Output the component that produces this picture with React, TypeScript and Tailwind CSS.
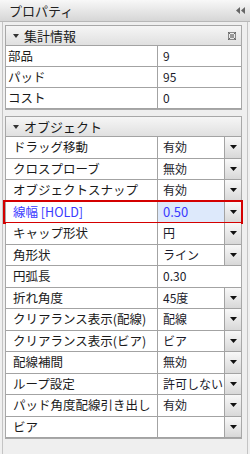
type Row = { label: string; value: string; dropdown?: boolean; selected?: boolean };

const summary: Row[] = [
  { label: '部品', value: '9' },
  { label: 'パッド', value: '95' },
  { label: 'コスト', value: '0' },
];

const objects: Row[] = [
  { label: 'ドラッグ移動', value: '有効', dropdown: true },
  { label: 'クロスプローブ', value: '無効', dropdown: true },
  { label: 'オブジェクトスナップ', value: '有効', dropdown: true },
  { label: '線幅 [HOLD]', value: '0.50', dropdown: true, selected: true },
  { label: 'キャップ形状', value: '円', dropdown: true },
  { label: '角形状', value: 'ライン', dropdown: true },
  { label: '円弧長', value: '0.30' },
  { label: '折れ角度', value: '45度', dropdown: true },
  { label: 'クリアランス表示(配線)', value: '配線', dropdown: true },
  { label: 'クリアランス表示(ビア)', value: 'ビア', dropdown: true },
  { label: '配線補間', value: '無効', dropdown: true },
  { label: 'ループ設定', value: '許可しない', dropdown: true },
  { label: 'パッド角度配線引き出し', value: '有効', dropdown: true },
  { label: 'ビア', value: '', dropdown: true },
];

function Caret() {
  return (
    <svg width="7" height="4" viewBox="0 0 7 4">
      <path d="M0 0h7L3.5 4z" fill="#111" />
    </svg>
  );
}

function PropRow({ row, tall, indent }: { row: Row; tall?: boolean; indent?: boolean }) {
  const sel = row.selected;
  return (
    <div
      className={
        'relative flex border-b border-[#a3a3a3] ' +
        (tall ? 'h-[21.5px] ' : 'h-[21px] ') +
        (sel ? 'bg-[#dde9fb]' : 'bg-white')
      }
    >
      <div
        className={
          'w-[152px] shrink-0 border-r border-[#a3a3a3] text-[12.5px] leading-[20px] whitespace-nowrap overflow-hidden ' +
          (indent ? 'pl-[7px] ' : 'pl-[2px] ') +
          (sel ? 'bg-white text-[#3a3aff]' : 'text-[#1a1a1a]')
        }
      >
        {row.label}
      </div>
      <div
        className={
          'flex-1 min-w-0 pl-[5px] text-[12px] leading-[20px] whitespace-nowrap overflow-hidden ' +
          (sel ? 'text-[#3a3aff] text-[13px]' : 'text-[#1a1a2a]')
        }
      >
        {row.value}
      </div>
      {row.dropdown && (
        <div className="w-[17px] shrink-0 border-l border-[#a3a3a3] bg-gradient-to-b from-[#f8f8f8] to-[#d8d8d8] flex items-center justify-center">
          <Caret />
        </div>
      )}
      {sel && (
        <div className="absolute left-[-3px] right-[-2px] top-[-2px] bottom-[-2px] border-2 border-[#d40000] pointer-events-none" />
      )}
    </div>
  );
}

function Section({
  title,
  rows,
  pin,
  tall,
  indent,
}: {
  title: string;
  rows: Row[];
  pin?: boolean;
  tall?: boolean;
  indent?: boolean;
}) {
  return (
    <div className="border border-[#a8a8a8] bg-white">
      <div className="flex h-[20px] items-center justify-between border-b border-[#a3a3a3] bg-gradient-to-b from-[#f6f6f6] to-[#e0e0e0] pl-[7px] pr-[5px]">
        <div className="flex items-center gap-[5px] text-[13px] text-[#1a1a1a]">
          <svg width="6" height="4" viewBox="0 0 6 4">
            <path d="M0 0h6L3 4z" fill="#333" />
          </svg>
          <span>{title}</span>
        </div>
        {pin && (
          <svg width="8" height="8" viewBox="0 0 8 8">
            <rect x="0.5" y="0.5" width="7" height="7" fill="none" stroke="#888" />
            <rect x="2" y="2" width="4" height="4" fill="#999" />
            <path d="M0 0l2 2M8 0L6 2M0 8l2-2M8 8L6 6" stroke="#666" />
          </svg>
        )}
      </div>
      {rows.map((r) => (
        <PropRow key={r.label} row={r} tall={tall} indent={indent} />
      ))}
    </div>
  );
}

export default function App() {
  return (
    <div
      className="w-[250px] h-[454px] bg-[#f0f0f0] flex flex-col overflow-hidden"
      style={{ fontFamily: '"Noto Sans CJK JP", "Noto Sans", sans-serif' }}
    >
      <div className="h-[22px] shrink-0 flex items-center justify-between pl-[9px] pr-[5px] bg-gradient-to-b from-[#f8f8f8] to-[#d6d6d6] border-b border-[#b8b8b8]">
        <span className="text-[13px] text-[#222]">プロパティ</span>
        <svg width="9" height="7" viewBox="0 0 9 7">
          <path d="M4 0v7L0 3.5z M9 0v7L5 3.5z" fill="#666" />
        </svg>
      </div>
      <div className="flex-1 mx-[2px] border-x border-[#c4c4c4] bg-[#efefef] pl-[2px] pr-[5px] pt-[3px] flex flex-col gap-[6px]">
        <Section title="集計情報" rows={summary} pin />
        <Section title="オブジェクト" rows={objects} tall indent />
      </div>
    </div>
  );
}
